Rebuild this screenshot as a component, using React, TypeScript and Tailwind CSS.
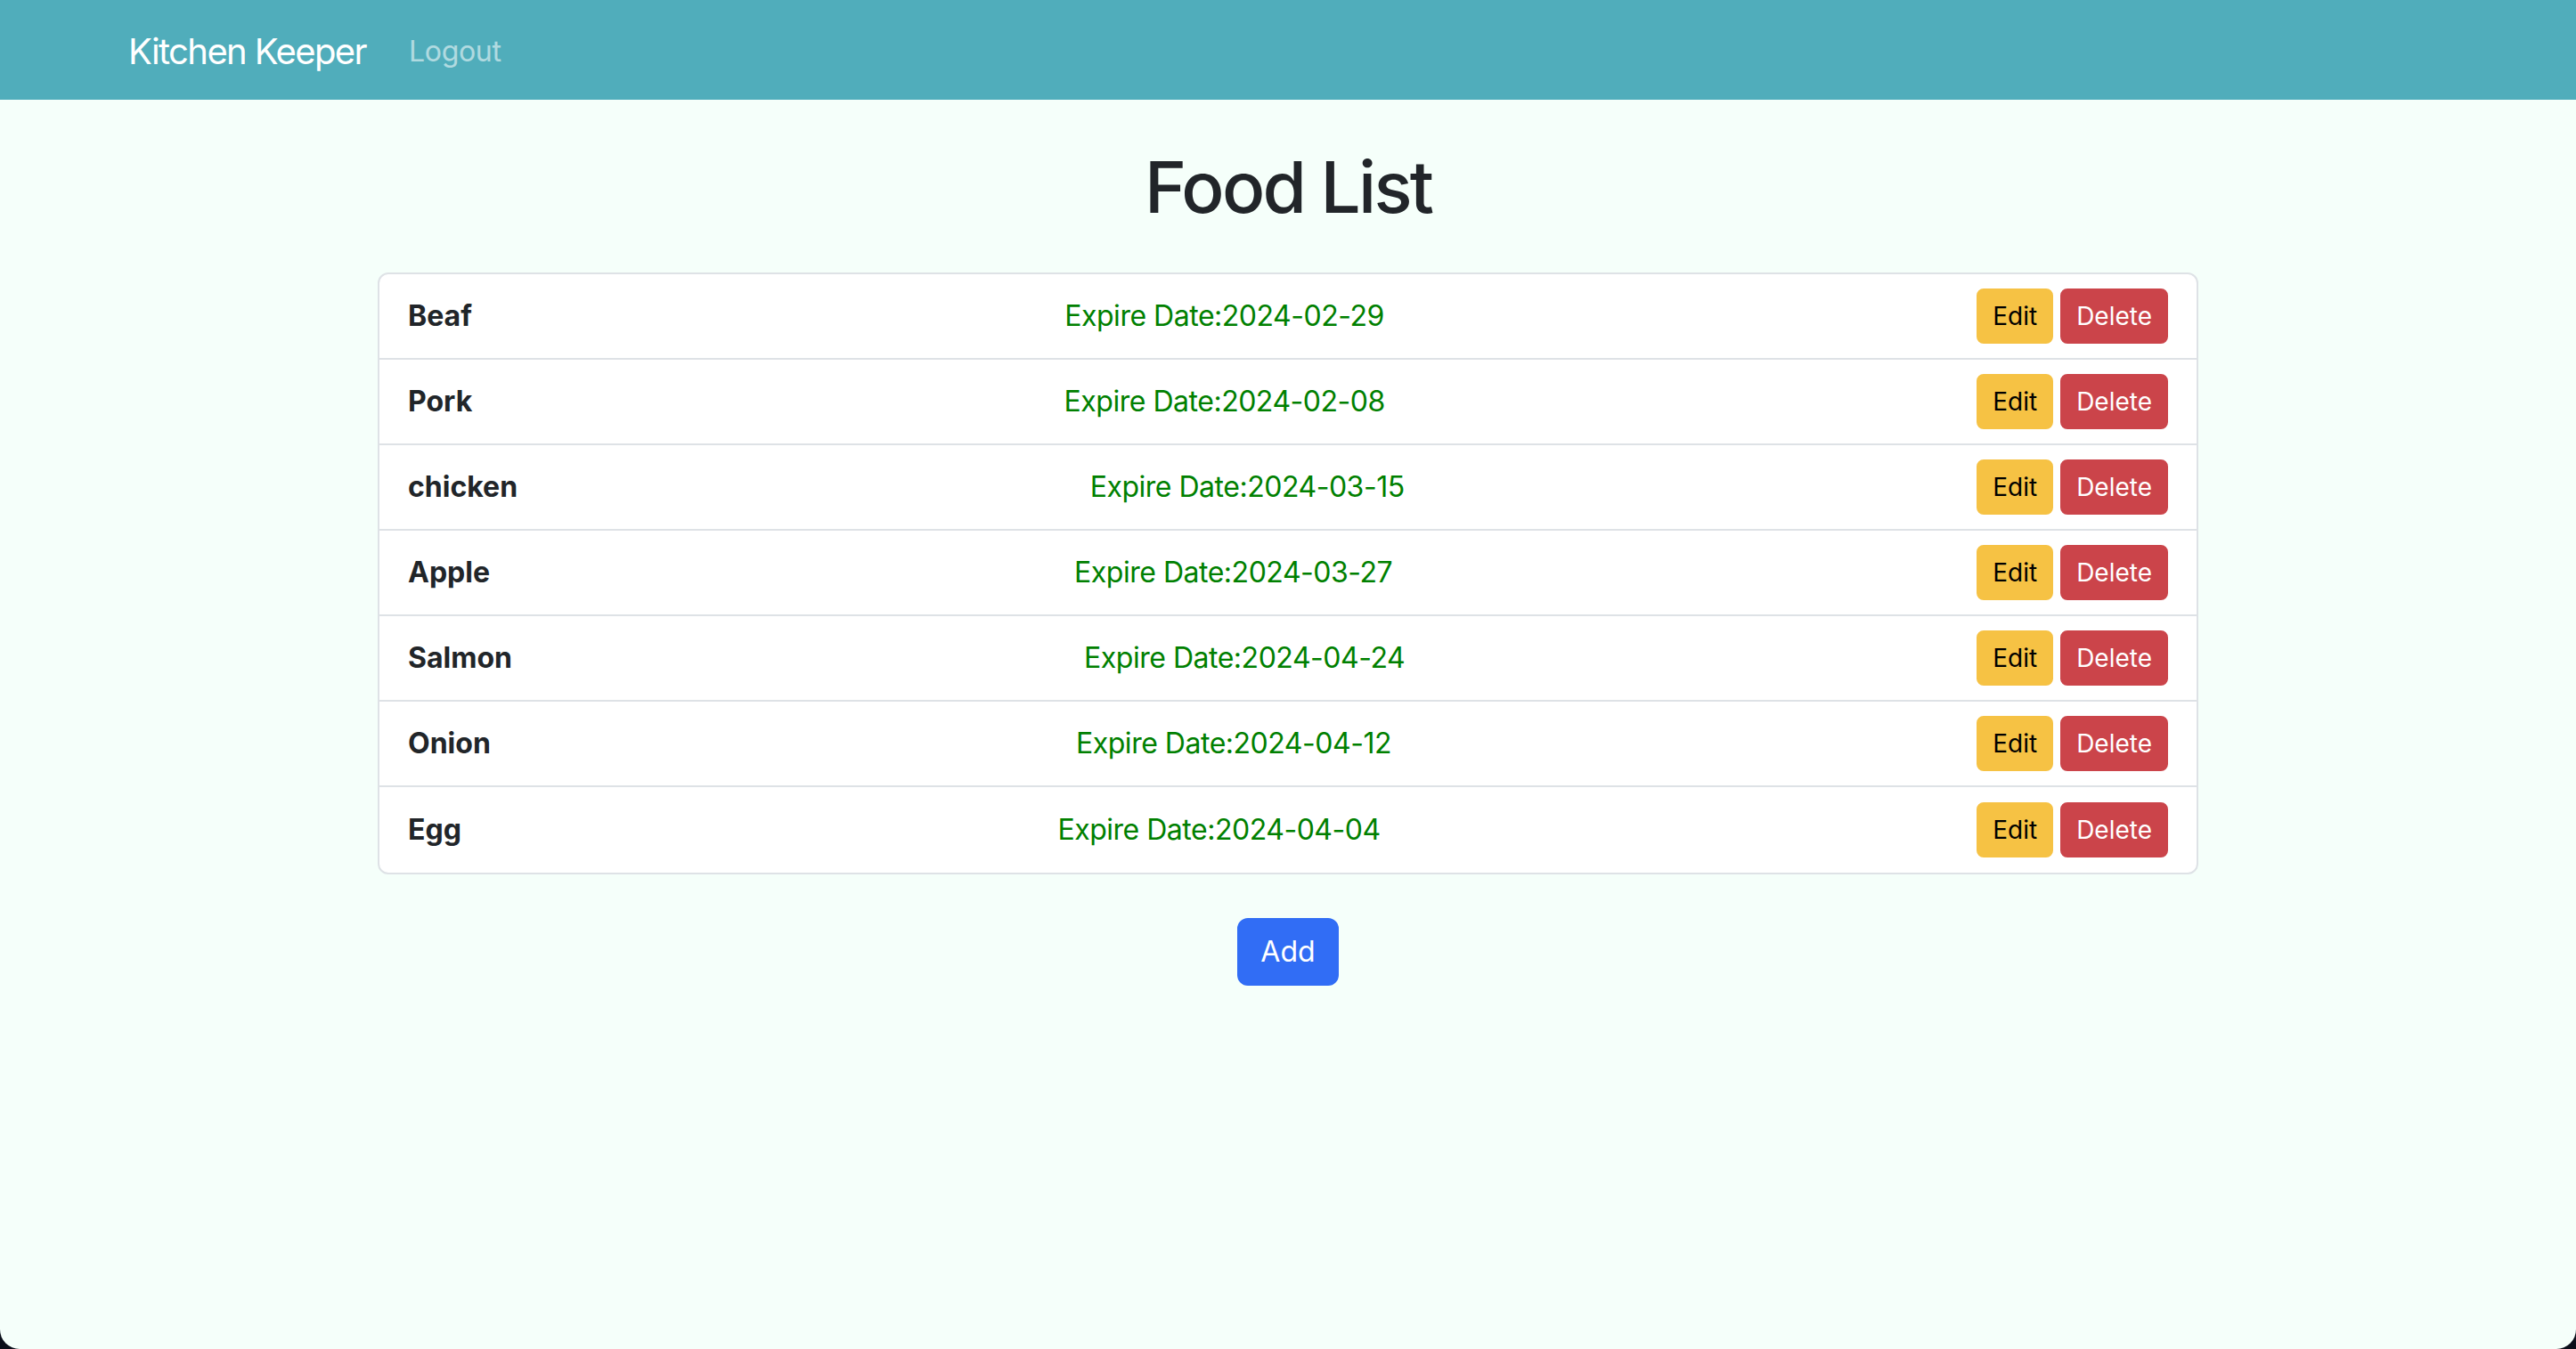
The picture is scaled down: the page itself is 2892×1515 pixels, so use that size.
import React from "react";

const foods = [
  { name: "Beaf", date: "2024-02-29" },
  { name: "Pork", date: "2024-02-08" },
  { name: "chicken", date: "2024-03-15" },
  { name: "Apple", date: "2024-03-27" },
  { name: "Salmon", date: "2024-04-24" },
  { name: "Onion", date: "2024-04-12" },
  { name: "Egg", date: "2024-04-04" },
];

export default function App() {
  return (
    <div
      className="w-full h-[1515px] bg-[#0b0f1a]"
      style={{ fontFamily: "Inter, Roboto, 'Liberation Sans', sans-serif" }}
    >
      <div className="w-full h-full bg-[#f5fffa] rounded-b-[22px] overflow-hidden flex flex-col">
        <nav className="h-[112px] shrink-0 bg-[#50adbb] flex items-center pl-[144px] pt-[4px]">
          <span className="text-[40px] leading-[60px] tracking-[-0.04em] text-white mr-[32px]">Kitchen Keeper</span>
          <span className="text-[32px] leading-[48px] tracking-[-0.01em] text-white/55 px-[16px]">Logout</span>
        </nav>
        <main className="flex flex-col items-center pt-[50px]">
          <h1 className="text-[80px] leading-[96px] font-medium tracking-[-0.035em] text-[#212529] mb-[48px]">Food List</h1>
          <ul className="w-[2044px] border-2 border-[#dee2e6] rounded-[12px] bg-white flex flex-col">
            {foods.map((f, i) => (
              <li
                key={f.name}
                className={
                  "flex justify-between items-center px-[32px] h-[96px] " +
                  (i < foods.length - 1 ? "border-b-2 border-[#dee2e6]" : "")
                }
              >
                <span className="text-[32px] leading-[48px] font-bold text-[#212529]">{f.name}</span>
                <span className="text-[32px] leading-[48px] tracking-[-0.015em] text-[#008000]">Expire Date:{f.date}</span>
                <div className="flex items-center gap-[8px]">
                  <button className="h-[62px] px-[16px] border-2 border-[#f6c244] bg-[#f6c244] rounded-[8px] text-[28px] leading-[42px] text-black">
                    Edit
                  </button>
                  <button className="h-[62px] px-[16px] border-2 border-[#cb444a] bg-[#cb444a] rounded-[8px] text-[28px] leading-[42px] text-white">
                    Delete
                  </button>
                </div>
              </li>
            ))}
          </ul>
          <button className="mt-[49px] h-[76px] px-[24px] border-2 border-[#316df5] bg-[#316df5] rounded-[12px] text-[32px] leading-[48px] text-white">
            Add
          </button>
        </main>
      </div>
    </div>
  );
}
